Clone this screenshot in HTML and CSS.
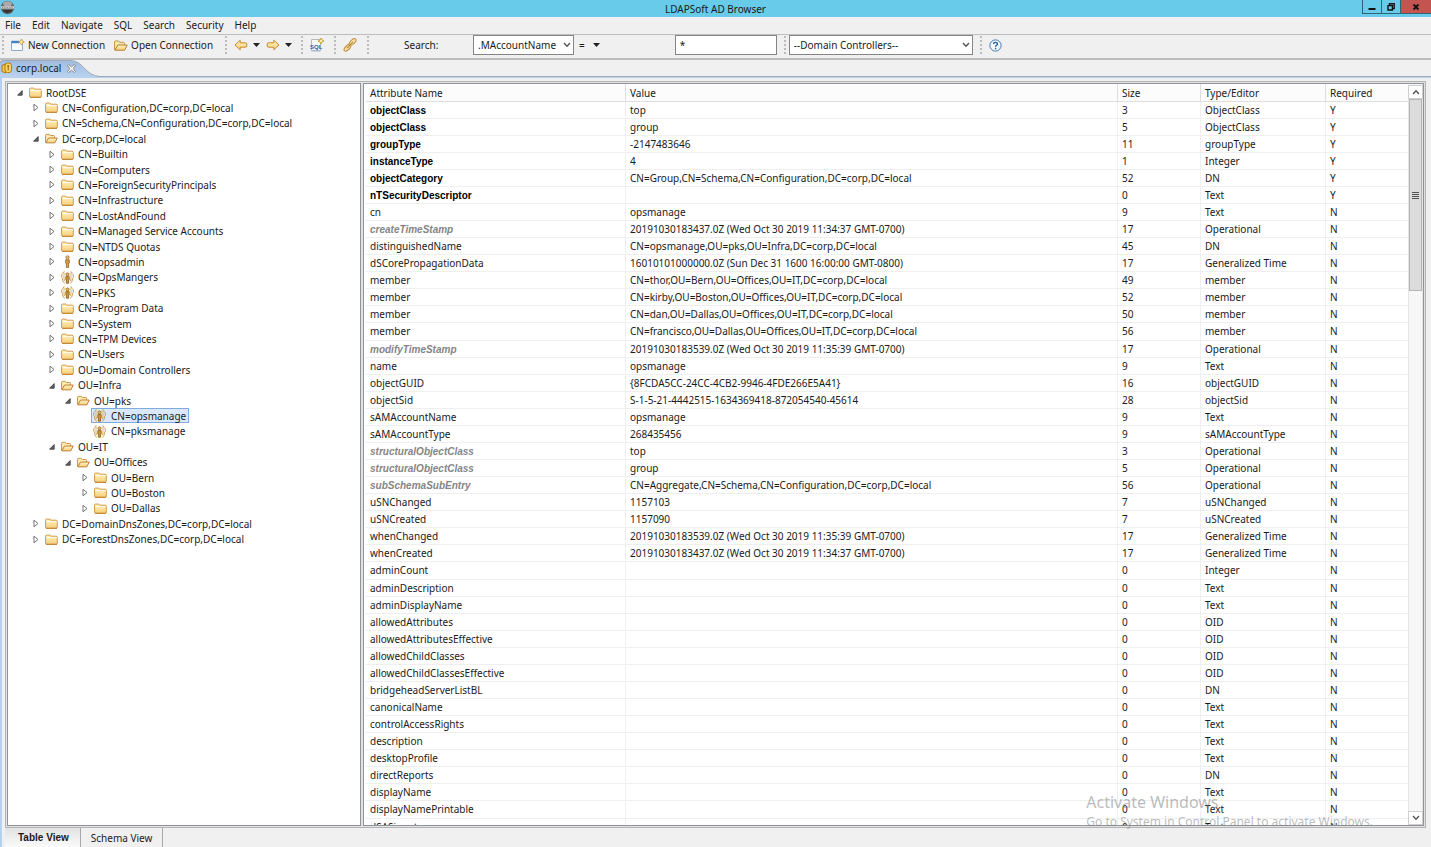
FILE: index.html
```html
<!DOCTYPE html>
<html lang="en">
<head>
<meta charset="utf-8">
<title>LDAPSoft AD Browser</title>
<link rel="stylesheet" href="styles.css">
</head>
<body>
<svg class="defs" aria-hidden="true">
  <defs>
    <linearGradient id="gold" x1="0" y1="0" x2="0" y2="1"><stop offset="0" stop-color="#fff3c4"/><stop offset="1" stop-color="#f8cf78"/></linearGradient>
    <linearGradient id="tabfill" x1="0" y1="0" x2="0" y2="1"><stop offset="0" stop-color="#9fbce0"/><stop offset="1" stop-color="#b9d2ef"/></linearGradient>
  </defs>
  <symbol id="folder" viewBox="0 0 13 11"><path d="M.6 9.2V2.2Q.6 1.1 1.6 1.1H4.6Q5.4 1.1 5.7 2.2H11Q12.3 2.2 12.3 3.3V9.2Q12.3 10.3 11.2 10.3H1.7Q.6 10.3.6 9.2Z" fill="url(#gold)" stroke="#d3994a"/><path d="M1.2 3.6H11.8" stroke="#fffbe6"/><path d="M1 10.3H12" stroke="#c08235"/></symbol>
  <symbol id="open" viewBox="0 0 14 11"><path d="M.6 9.8V2Q.6 1 1.6 1H4.6L5.6 2.3H9.4Q10.3 2.3 10.3 3.3V5" fill="#fdebb4" stroke="#c88d3c"/><path d="M.9 10.2L3.8 5H13.2L10.6 10.2Z" fill="url(#gold)" stroke="#b97a2c"/></symbol>
  <symbol id="person" viewBox="0 0 13 13"><circle cx="6.5" cy="2.4" r="1.6" fill="#e9bd6c" stroke="#a26c20" stroke-width=".8"/><path d="M4.7 4.8H8.3V8.2H7.6V12.4H5.4V8.2H4.7Z" fill="#d9a04a" stroke="#99631c" stroke-width=".8"/></symbol>
  <symbol id="group" viewBox="0 0 13 13"><path d="M3.6.8Q1.9.7 2.1 2.4Q.5 3.4.6 5.2Q.7 6.8 1.5 7.4Q1.6 11.6 3.8 12.3M9.4.8Q11.1.7 10.9 2.4Q12.5 3.4 12.4 5.2Q12.3 6.8 11.5 7.4Q11.4 11.6 9.2 12.3" fill="none" stroke="#c9954a"/><path d="M4 2.2Q2.6 3.6 2.9 5.6Q3 8 3.6 10M9 2.2Q10.4 3.6 10.1 5.6Q10 8 9.4 10" stroke="#dcb26c" fill="none"/><circle cx="6.5" cy="3.4" r="1.5" fill="#e4b25c" stroke="#99631c" stroke-width=".8"/><path d="M4.8 5.6H8.2V8.8H7.6V12.2H5.4V8.8H4.8Z" fill="#cf9440" stroke="#8d5a18" stroke-width=".8"/></symbol>
  <symbol id="closed" viewBox="0 0 6 9"><path d="M1 1.2L5 4.5L1 7.8Z" fill="#fff" stroke="#666" stroke-width=".9"/></symbol>
  <symbol id="opened" viewBox="0 0 6 9"><path d="M5.2 2.6V7.2H.6Z" fill="#666" stroke="#333" stroke-width=".8"/></symbol>
  <symbol id="caret" viewBox="0 0 7 4"><path d="M0 0H7L3.5 4Z" fill="#222"/></symbol>
  <symbol id="arrow" viewBox="0 0 14 12"><path d="M1 6L6.2 1.2V3.8H11.2Q12.8 3.8 12.8 5V7Q12.8 8.2 11.2 8.2H6.2V10.8Z" fill="url(#gold)" stroke="#c48a30"/></symbol>
  <symbol id="chev" viewBox="0 0 8 6"><path d="M1 1L4 4.3L7 1" fill="none" stroke="#555" stroke-width="1.4"/></symbol>
  <symbol id="spark" viewBox="0 0 6 6"><path d="M3 0L4 2L6 3L4 4L3 6L2 4L0 3L2 2Z" fill="#fff0a8" stroke="#c79a38" stroke-width=".9"/></symbol>
</svg>

<header class="titlebar">
  <svg class="logo" viewBox="0 0 16 16"><circle cx="7.5" cy="7.5" r="6.7" fill="#666"/><ellipse cx="7.5" cy="3.8" rx="4.4" ry="2.6" fill="#ababab"/><path d="M1 7.4H14" stroke="#ddd" stroke-width="2.2"/><path d="M2 7.4H13" stroke="#777" stroke-width=".9" stroke-dasharray="1 .7"/><path d="M2 10Q7.5 16.5 13 10Z" fill="#333"/></svg>
  <h1 class="title">LDAPSoft AD Browser</h1>
  <div class="winbtns">
    <button class="winbtn" aria-label="Minimize"><svg width="8" height="8" viewBox="0 0 8 8"><path d="M.5 6H7.5" stroke="#111" stroke-width="2"/></svg></button>
    <button class="winbtn" aria-label="Restore"><svg width="8" height="8" viewBox="0 0 8 8"><path d="M2.5 2V.8H7.2V5.6H6M1 2.6H5.4V7H1Z" fill="none" stroke="#111" stroke-width="1.4"/></svg></button>
    <button class="winbtn close" aria-label="Close"><svg width="8" height="8" viewBox="0 0 8 8"><path d="M1.5 1.5L6.5 6.5M6.5 1.5L1.5 6.5" stroke="#111" stroke-width="1.8"/></svg></button>
  </div>
</header>

<nav class="menubar">
  <button>File</button><button>Edit</button><button>Navigate</button><button>SQL</button><button>Search</button><button>Security</button><button>Help</button>
</nav>

<div class="toolbar">
  <i class="grip"></i>
  <button class="tool labelled"><svg width="14" height="13" viewBox="0 0 14 13"><path d="M.5 2.5H11.5V11.5H.5Z" fill="#f7fbff" stroke="#92a9c4"/><path d="M.5 1.8H8V4.2H.5Z" fill="#3f83c8"/><use href="#spark" x="7.5" y="0" width="6" height="6"/></svg>New Connection</button>
  <button class="tool labelled"><svg width="14" height="11"><use href="#open"/></svg>Open Connection</button>
  <i class="grip nav-grip"></i>
  <button class="tool" aria-label="Back"><svg width="14" height="12"><use href="#arrow"/></svg></button>
  <button class="tool drop" aria-label="Back history"><svg width="7" height="4"><use href="#caret"/></svg></button>
  <button class="tool" aria-label="Forward"><svg class="flip" width="14" height="12"><use href="#arrow"/></svg></button>
  <button class="tool drop" aria-label="Forward history"><svg width="7" height="4"><use href="#caret"/></svg></button>
  <i class="grip"></i>
  <button class="tool" aria-label="New SQL"><svg width="14" height="14" viewBox="0 0 14 14"><path d="M1.5 1.5H10.5V12.5H1.5Z" fill="#fbfcff" stroke="#b6b9c2"/><text class="sqltext" x="0" y="11">SQL</text><path d="M1.5 13H10.5" stroke="#a9b6d2"/><use href="#spark" x="8" y="0" width="6" height="6"/></svg></button>
  <i class="grip"></i>
  <button class="tool" aria-label="Link"><svg width="14" height="14" viewBox="0 0 14 14"><g fill="#f8e0a4" stroke="#b98a3a" stroke-width="1"><ellipse cx="9.6" cy="4" rx="4.2" ry="2.1" transform="rotate(-45 9.6 4)"/><ellipse cx="4.4" cy="9.8" rx="4.2" ry="2.1" transform="rotate(-45 4.4 9.8)"/></g><path d="M4 10.2L10 3.8" stroke="#b98a3a" stroke-width="1.2"/><path d="M5.4 7.4L7 5.6M7.2 8.6L8.8 6.8" stroke="#e2b457"/></svg></button>
  <i class="grip"></i>
  <label class="search-label" for="attr">Search:</label>
  <span class="combo attr"><select id="attr"><option>.MAccountName</option></select><svg width="8" height="6"><use href="#chev"/></svg></span>
  <button class="tool op" aria-label="Operator">=<svg width="7" height="4"><use href="#caret"/></svg></button>
  <input class="term" type="text" value="*" aria-label="Search value">
  <i class="grip"></i>
  <span class="combo dcs"><select aria-label="Domain controllers"><option>--Domain Controllers--</option></select><svg width="8" height="6"><use href="#chev"/></svg></span>
  <i class="grip"></i>
  <button class="tool" aria-label="Help"><svg width="13" height="13" viewBox="0 0 13 13"><circle cx="6.5" cy="6.5" r="5.6" fill="#f4f9ff" stroke="#3f79b4"/><path d="M4.6 5.1Q4.6 3.4 6.5 3.4T8.4 5Q8.4 5.9 7.4 6.4Q6.6 6.8 6.6 7.8M6.6 8.8V10.2" fill="none" stroke="#2563a5" stroke-width="1.4"/></svg></button>
</div>

<div class="tabstrip">
  <button class="tab">
    <svg class="tabshape" width="100" height="17" viewBox="0 0 100 17"><path d="M0 17V3Q0 .5 3 .5H70C84 .5 84 15.5 100 16.5V17Z" fill="url(#tabfill)"/><path d="M0 3Q0 .5 3 .5H70C84 .5 84 15.5 100 16.5" fill="none" stroke="#9da9b8"/></svg>
    <svg width="12" height="12" viewBox="0 0 12 12"><path d="M1 3.5L4.5 2V11L1 9.5Z" fill="#f5c242" stroke="#b07a12"/><rect x="4" y="1" width="6.5" height="9.5" rx="2.5" fill="#fbd568" stroke="#b07a12"/><path d="M7.2 3V8.5M6.2 4H8.2" stroke="#8d5f0c"/></svg>
    <span>corp.local</span>
    <svg width="9" height="9" viewBox="0 0 9 9"><path d="M.6 1.6L1.6.6L4.5 2.8L7.4.6L8.4 1.6L6.2 4.5L8.4 7.4L7.4 8.4L4.5 6.2L1.6 8.4L.6 7.4L2.8 4.5Z" fill="#fff" stroke="#777" stroke-width=".9"/></svg>
  </button>
</div>

<main class="frame">
  <div class="panes">
    <ul class="tree" role="tree">
      <li class="l0"><svg class="tw"><use href="#opened"/></svg><svg class="ic"><use href="#folder"/></svg><span>RootDSE</span></li>
      <li class="l1"><svg class="tw"><use href="#closed"/></svg><svg class="ic"><use href="#folder"/></svg><span>CN=Configuration,DC=corp,DC=local</span></li>
      <li class="l1"><svg class="tw"><use href="#closed"/></svg><svg class="ic"><use href="#folder"/></svg><span>CN=Schema,CN=Configuration,DC=corp,DC=local</span></li>
      <li class="l1"><svg class="tw"><use href="#opened"/></svg><svg class="ic"><use href="#open"/></svg><span>DC=corp,DC=local</span></li>
      <li class="l2"><svg class="tw"><use href="#closed"/></svg><svg class="ic"><use href="#folder"/></svg><span>CN=Builtin</span></li>
      <li class="l2"><svg class="tw"><use href="#closed"/></svg><svg class="ic"><use href="#folder"/></svg><span>CN=Computers</span></li>
      <li class="l2"><svg class="tw"><use href="#closed"/></svg><svg class="ic"><use href="#folder"/></svg><span>CN=ForeignSecurityPrincipals</span></li>
      <li class="l2"><svg class="tw"><use href="#closed"/></svg><svg class="ic"><use href="#folder"/></svg><span>CN=Infrastructure</span></li>
      <li class="l2"><svg class="tw"><use href="#closed"/></svg><svg class="ic"><use href="#folder"/></svg><span>CN=LostAndFound</span></li>
      <li class="l2"><svg class="tw"><use href="#closed"/></svg><svg class="ic"><use href="#folder"/></svg><span>CN=Managed Service Accounts</span></li>
      <li class="l2"><svg class="tw"><use href="#closed"/></svg><svg class="ic"><use href="#folder"/></svg><span>CN=NTDS Quotas</span></li>
      <li class="l2"><svg class="tw"><use href="#closed"/></svg><svg class="ic"><use href="#person"/></svg><span>CN=opsadmin</span></li>
      <li class="l2"><svg class="tw"><use href="#closed"/></svg><svg class="ic"><use href="#group"/></svg><span>CN=OpsMangers</span></li>
      <li class="l2"><svg class="tw"><use href="#closed"/></svg><svg class="ic"><use href="#group"/></svg><span>CN=PKS</span></li>
      <li class="l2"><svg class="tw"><use href="#closed"/></svg><svg class="ic"><use href="#folder"/></svg><span>CN=Program Data</span></li>
      <li class="l2"><svg class="tw"><use href="#closed"/></svg><svg class="ic"><use href="#folder"/></svg><span>CN=System</span></li>
      <li class="l2"><svg class="tw"><use href="#closed"/></svg><svg class="ic"><use href="#folder"/></svg><span>CN=TPM Devices</span></li>
      <li class="l2"><svg class="tw"><use href="#closed"/></svg><svg class="ic"><use href="#folder"/></svg><span>CN=Users</span></li>
      <li class="l2"><svg class="tw"><use href="#closed"/></svg><svg class="ic"><use href="#folder"/></svg><span>OU=Domain Controllers</span></li>
      <li class="l2"><svg class="tw"><use href="#opened"/></svg><svg class="ic"><use href="#open"/></svg><span>OU=Infra</span></li>
      <li class="l3"><svg class="tw"><use href="#opened"/></svg><svg class="ic"><use href="#open"/></svg><span>OU=pks</span></li>
      <li class="l4 leaf"><div class="selected"><svg class="ic"><use href="#group"/></svg><span>CN=opsmanage</span></div></li>
      <li class="l4 leaf"><div class="item"><svg class="ic"><use href="#group"/></svg><span>CN=pksmanage</span></div></li>
      <li class="l2"><svg class="tw"><use href="#opened"/></svg><svg class="ic"><use href="#open"/></svg><span>OU=IT</span></li>
      <li class="l3"><svg class="tw"><use href="#opened"/></svg><svg class="ic"><use href="#open"/></svg><span>OU=Offices</span></li>
      <li class="l4"><svg class="tw"><use href="#closed"/></svg><svg class="ic"><use href="#folder"/></svg><span>OU=Bern</span></li>
      <li class="l4"><svg class="tw"><use href="#closed"/></svg><svg class="ic"><use href="#folder"/></svg><span>OU=Boston</span></li>
      <li class="l4"><svg class="tw"><use href="#closed"/></svg><svg class="ic"><use href="#folder"/></svg><span>OU=Dallas</span></li>
      <li class="l1"><svg class="tw"><use href="#closed"/></svg><svg class="ic"><use href="#folder"/></svg><span>DC=DomainDnsZones,DC=corp,DC=local</span></li>
      <li class="l1"><svg class="tw"><use href="#closed"/></svg><svg class="ic"><use href="#folder"/></svg><span>DC=ForestDnsZones,DC=corp,DC=local</span></li>
    </ul>

    <section class="grid">
      <div class="viewport">
        <table>
          <colgroup><col class="c-name"><col><col class="c-size"><col class="c-type"><col class="c-req"></colgroup>
          <thead><tr><th>Attribute Name<th>Value<th>Size<th>Type/Editor<th>Required</thead>
          <tbody>
            <tr class="must"><td>objectClass<td>top<td>3<td>ObjectClass<td>Y
            <tr class="must"><td>objectClass<td>group<td>5<td>ObjectClass<td>Y
            <tr class="must"><td>groupType<td>-2147483646<td>11<td>groupType<td>Y
            <tr class="must"><td>instanceType<td>4<td>1<td>Integer<td>Y
            <tr class="must"><td>objectCategory<td>CN=Group,CN=Schema,CN=Configuration,DC=corp,DC=local<td>52<td>DN<td>Y
            <tr class="must"><td>nTSecurityDescriptor<td><td>0<td>Text<td>Y
            <tr><td>cn<td>opsmanage<td>9<td>Text<td>N
            <tr class="oper"><td>createTimeStamp<td>20191030183437.0Z (Wed Oct 30 2019 11:34:37 GMT-0700)<td>17<td>Operational<td>N
            <tr><td>distinguishedName<td>CN=opsmanage,OU=pks,OU=Infra,DC=corp,DC=local<td>45<td>DN<td>N
            <tr><td>dSCorePropagationData<td>16010101000000.0Z (Sun Dec 31 1600 16:00:00 GMT-0800)<td>17<td>Generalized Time<td>N
            <tr><td>member<td>CN=thor,OU=Bern,OU=Offices,OU=IT,DC=corp,DC=local<td>49<td>member<td>N
            <tr><td>member<td>CN=kirby,OU=Boston,OU=Offices,OU=IT,DC=corp,DC=local<td>52<td>member<td>N
            <tr><td>member<td>CN=dan,OU=Dallas,OU=Offices,OU=IT,DC=corp,DC=local<td>50<td>member<td>N
            <tr><td>member<td>CN=francisco,OU=Dallas,OU=Offices,OU=IT,DC=corp,DC=local<td>56<td>member<td>N
            <tr class="oper"><td>modifyTimeStamp<td>20191030183539.0Z (Wed Oct 30 2019 11:35:39 GMT-0700)<td>17<td>Operational<td>N
            <tr><td>name<td>opsmanage<td>9<td>Text<td>N
            <tr><td>objectGUID<td>{8FCDA5CC-24CC-4CB2-9946-4FDE266E5A41}<td>16<td>objectGUID<td>N
            <tr><td>objectSid<td>S-1-5-21-4442515-1634369418-872054540-45614<td>28<td>objectSid<td>N
            <tr><td>sAMAccountName<td>opsmanage<td>9<td>Text<td>N
            <tr><td>sAMAccountType<td>268435456<td>9<td>sAMAccountType<td>N
            <tr class="oper"><td>structuralObjectClass<td>top<td>3<td>Operational<td>N
            <tr class="oper"><td>structuralObjectClass<td>group<td>5<td>Operational<td>N
            <tr class="oper"><td>subSchemaSubEntry<td>CN=Aggregate,CN=Schema,CN=Configuration,DC=corp,DC=local<td>56<td>Operational<td>N
            <tr><td>uSNChanged<td>1157103<td>7<td>uSNChanged<td>N
            <tr><td>uSNCreated<td>1157090<td>7<td>uSNCreated<td>N
            <tr><td>whenChanged<td>20191030183539.0Z (Wed Oct 30 2019 11:35:39 GMT-0700)<td>17<td>Generalized Time<td>N
            <tr><td>whenCreated<td>20191030183437.0Z (Wed Oct 30 2019 11:34:37 GMT-0700)<td>17<td>Generalized Time<td>N
            <tr><td>adminCount<td><td>0<td>Integer<td>N
            <tr><td>adminDescription<td><td>0<td>Text<td>N
            <tr><td>adminDisplayName<td><td>0<td>Text<td>N
            <tr><td>allowedAttributes<td><td>0<td>OID<td>N
            <tr><td>allowedAttributesEffective<td><td>0<td>OID<td>N
            <tr><td>allowedChildClasses<td><td>0<td>OID<td>N
            <tr><td>allowedChildClassesEffective<td><td>0<td>OID<td>N
            <tr><td>bridgeheadServerListBL<td><td>0<td>DN<td>N
            <tr><td>canonicalName<td><td>0<td>Text<td>N
            <tr><td>controlAccessRights<td><td>0<td>Text<td>N
            <tr><td>description<td><td>0<td>Text<td>N
            <tr><td>desktopProfile<td><td>0<td>Text<td>N
            <tr><td>directReports<td><td>0<td>DN<td>N
            <tr><td>displayName<td><td>0<td>Text<td>N
            <tr><td>displayNamePrintable<td><td>0<td>Text<td>N
            <tr><td>dSASignature<td><td>0<td>Text<td>N
          </tbody>
        </table>
      </div>
      <div class="scrollbar">
        <button aria-label="Scroll up"><svg class="up" width="8" height="6"><use href="#chev"/></svg></button>
        <div class="track"><div class="thumb"><i></i></div></div>
        <button aria-label="Scroll down"><svg width="8" height="6"><use href="#chev"/></svg></button>
      </div>
      <div class="watermark"><p class="wm-title">Activate Windows</p><p class="wm-text">Go to System in Control Panel to activate Windows.</p></div>
    </section>
  </div>
  <div class="views"><button class="view current">Table View</button><button class="view">Schema View</button></div>
</main>
</body>
</html>
```
FILE: styles.css
```css
* { box-sizing: border-box; }

body {
  margin: 0;
  height: 100vh;
  display: flex;
  flex-direction: column;
  overflow: hidden;
  background: #f0f0f0;
  color: #1a1a1a;
  font: 10px/14px "Noto Sans", "Open Sans", sans-serif;
}

button, input, select { font: inherit; color: inherit; }
button { border: 0; padding: 0; background: none; }
svg { display: block; flex: none; }
.defs { position: absolute; width: 0; height: 0; }

.titlebar {
  display: flex;
  justify-content: space-between;
  height: 17px;
  background: #67cbe9;
  position: relative;
}
.logo { width: 16px; height: 16px; }
.title {
  position: absolute;
  inset: 2px 0 0;
  margin: 0;
  text-align: center;
  font-size: 10px;
  font-weight: 400;
}
.winbtns { display: flex; height: 14px; position: relative; }
.winbtn {
  width: 19px;
  display: grid;
  place-items: center;
  border: solid #2d6477;
  border-width: 0 0 1px 1px;
}
.winbtn.close { width: 31px; background: #c35450; }

.menubar {
  display: flex;
  gap: 11px;
  height: 17px;
  padding: 0 5px 2px;
  align-items: center;
}

.toolbar {
  display: flex;
  align-items: center;
  height: 26px;
  border: solid #bdbdbd;
  border-width: 1px 0 2px;
  padding: 0 0 3px 2px;
}
.grip {
  flex: none;
  width: 2px;
  height: 18px;
  background: repeating-linear-gradient(#bbb 0 2px, transparent 2px 4px);
}
.tool { display: flex; align-items: center; gap: 3px; padding: 0 0 0 7px; }
.tool + .grip { margin-left: 10px; }
.tool.drop + .grip { margin-left: 9px; }
.labelled + .nav-grip { margin-left: 12px; }
.labelled + .labelled { padding-left: 9px; }
.drop { padding: 0 3px 0 5px; }
.flip { transform: scaleX(-1); }
.drop + .tool { padding-left: 3px; }
.drop + .tool + .drop { padding: 0 0 0 5px; }
.sqltext { font: bold 6px "Liberation Sans", sans-serif; fill: #2d58a6; }
.search-label { width: 69px; margin-left: 35px; }
.combo { position: relative; height: 20px; flex: none; }
.combo select {
  appearance: none;
  width: 100%;
  height: 100%;
  border: 1px solid #858585;
  border-radius: 0;
  background: #fff;
  padding: 0 0 0 4px;
}
.combo svg { position: absolute; right: 3px; top: 7px; pointer-events: none; }
.attr { width: 101px; }
.dcs { width: 184px; margin: 0 7px 0 3px; }
.op { gap: 8px; padding-left: 5px; }
.term {
  width: 102px;
  height: 20px;
  margin: 0 7px 0 75px;
  border: 1px solid #858585;
  padding: 0 4px;
}

.tabstrip { height: 17px; display: flex; border-bottom: 1px solid #a3abb5; }
.tab { position: relative; display: flex; align-items: center; gap: 3px; width: 100px; padding-left: 1px; }
.tab > * { position: relative; }
.tab .tabshape { position: absolute; left: 0; top: 0; }
.tab > :last-child { margin-left: 3px; }

.frame {
  flex: 1;
  min-height: 0;
  display: flex;
  flex-direction: column;
  border: solid #b7d0ee;
  border-width: 1px 0 0 2px;
  padding: 3px 5px 0 3px;
}
.panes {
  flex: 1;
  min-height: 0;
  display: grid;
  grid-template-columns: 354px 1fr;
  gap: 2px;
  border: 1px solid #b4b4b4;
  background: #e2e2e2;
  padding: 1px;
}
.tree {
  margin: 0;
  padding: 1px 0 0 9px;
  list-style: none;
  background: #fff;
  border: 1px solid #8f939b;
}
.tree li { display: flex; align-items: center; height: 15px; }
.tree li:nth-child(5n), .tree li:nth-child(5n+3) { height: 16px; }
.tw { width: 6px; height: 9px; margin-right: 6px; }
.ic { width: 13px; height: 13px; margin-right: 4px; }
.l1 { padding-left: 16px; }
.l2 { padding-left: 32px; }
.l3 { padding-left: 48px; }
.l4 { padding-left: 65px; }
.leaf { padding-left: 74px; }
.item, .selected { display: flex; align-items: center; height: 15px; border: 1px solid transparent; padding: 0 2px 0 1px; }
.selected { border-color: #7fabe0; background: #d9e9fb; }
.leaf .ic { margin-right: 5px; }

.grid {
  position: relative;
  min-width: 0;
  min-height: 0;
  display: flex;
  border: 1px solid #8f939b;
  background: #fff;
  padding-left: 2px;
}
.viewport { flex: 1; min-width: 0; overflow: hidden; }
table { width: 100%; table-layout: fixed; border-collapse: separate; border-spacing: 0; }
.c-name { width: 260px; }
.c-size { width: 83px; }
.c-type { width: 125px; }
.c-req { width: 82px; }
th, td {
  height: 17px;
  padding: 1px 4px 0;
  line-height: 14px;
  text-align: left;
  vertical-align: baseline;
  font-weight: 400;
  white-space: nowrap;
  border: solid #efefef;
  border-width: 0 1px 1px 0;
}
th { height: 18px; padding-top: 2px; background: #fcfcfc; border-color: #dedede; }
th:last-child, td:last-child { border-right: 0; }
tbody tr:nth-child(14n) td { height: 18px; }
.must td:first-child { font-family: "Liberation Sans", sans-serif; font-weight: 700; color: #000; }
.oper td:first-child { font-family: "Liberation Sans", sans-serif; font-weight: 700; font-style: italic; color: #858585; }

.scrollbar { width: 15px; display: flex; flex-direction: column; background: #f7f7f7; padding-top: 1px; }
.scrollbar button { height: 14px; display: grid; place-items: center; background: #fff; border: 1px solid #cfcfcf; }
.up { transform: scaleY(-1); }
.track { flex: 1; border: solid #e4e4e4; border-width: 0 1px; }
.thumb { height: 27%; display: grid; place-items: center; background: #dcdcdc; border: 1px solid #b5b5b5; }
.thumb i { width: 7px; height: 7px; background: repeating-linear-gradient(#555 0 1px, transparent 1px 2px); }

.watermark {
  position: absolute;
  right: 50px;
  bottom: -5px;
  color: rgba(120, 120, 120, .5);
  pointer-events: none;
}
.watermark p { margin: 0; white-space: nowrap; }
.wm-title { font-size: 16px; line-height: 22px; }
.wm-text { font-size: 12px; line-height: 17px; }

.views { display: flex; height: 19px; }
.view { padding: 0 10px; border-right: 1px solid #a8a8a8; }
.current { padding: 0 11px 0 13px; font-weight: 700; font-family: "Liberation Sans", sans-serif; background: linear-gradient(#e2e2e2, #fafafa); }
```
